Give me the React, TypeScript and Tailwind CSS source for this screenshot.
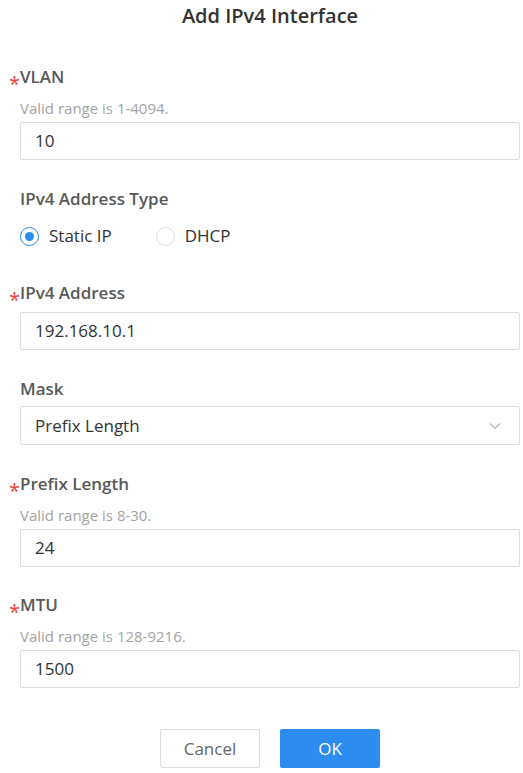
const fields = {
  vlan: { label: "VLAN", help: "Valid range is 1-4094.", value: "10" },
  prefix: { label: "Prefix Length", help: "Valid range is 8-30.", value: "24" },
  mtu: { label: "MTU", help: "Valid range is 128-9216.", value: "1500" },
};

function Label({ text, required, className = "" }: { text: string; required?: boolean; className?: string }) {
  return (
    <div className={`relative h-[22px] text-[17px] font-semibold leading-[22px] text-[#595959] ${className}`}>
      {required && (
        <span className="absolute left-[-11px] top-[7px] text-[20px] font-normal leading-[22px] text-[#f04134]">*</span>
      )}
      {text}
    </div>
  );
}

function TextInput({ value, className = "" }: { value: string; className?: string }) {
  return (
    <div
      className={`flex h-[38px] items-center rounded-[2px] border border-[#dedede] bg-white px-[14px] text-[17px] text-[#333] ${className}`}
    >
      {value}
    </div>
  );
}

function Help({ text }: { text: string }) {
  return <div className="mt-[10px] h-[20px] text-[15px] leading-[20px] text-[#a3a3a3]">{text}</div>;
}

function Radio({ checked, label }: { checked?: boolean; label: string }) {
  return (
    <div className="flex items-center gap-[10px]">
      <span
        className={`flex h-[19px] w-[19px] items-center justify-center rounded-full border bg-white ${
          checked ? "border-[#2d8cf0]" : "border-[#dedede]"
        }`}
      >
        {checked && <span className="h-[9px] w-[9px] rounded-full bg-[#2d8cf0]" />}
      </span>
      <span className="text-[17px] text-[#333]">{label}</span>
    </div>
  );
}

export default function App() {
  return (
    <div className="h-[773px] w-[523px] bg-white" style={{ fontFamily: '"Open Sans", "Noto Sans", sans-serif' }}>
      <div className="ml-[20px] w-[500px]">
        <h1 className="pt-[4px] text-center text-[20px] font-[550] leading-[24px] text-[#333]">Add IPv4 Interface</h1>

        <Label text={fields.vlan.label} required className="mt-[38px]" />
        <Help text={fields.vlan.help} />
        <TextInput value={fields.vlan.value} className="mt-[4px]" />

        <Label text="IPv4 Address Type" className="mt-[28px]" />
        <div className="mt-[15px] flex h-[22px] items-center gap-[44px]">
          <Radio checked label="Static IP" />
          <Radio label="DHCP" />
        </div>

        <Label text="IPv4 Address" required className="mt-[35px]" />
        <TextInput value="192.168.10.1" className="mt-[8px]" />

        <Label text="Mask" className="mt-[28px]" />
        <div className="mt-[6px] flex h-[39px] items-center justify-between rounded-[2px] border border-[#dedede] bg-white pl-[14px] pr-[18px] text-[17px] text-[#333]">
          <span>Prefix Length</span>
          <svg width="12" height="8" viewBox="0 0 12 8" fill="none" stroke="#b5b5b5" strokeWidth="1.2">
            <path d="M1 1.5l5 5 5-5" />
          </svg>
        </div>

        <Label text={fields.prefix.label} required className="mt-[28px]" />
        <Help text={fields.prefix.help} />
        <TextInput value={fields.prefix.value} className="mt-[4px]" />

        <Label text={fields.mtu.label} required className="mt-[27px]" />
        <Help text={fields.mtu.help} />
        <TextInput value={fields.mtu.value} className="mt-[4px]" />

        <div className="mt-[41px] flex justify-center gap-[20px]">
          <button className="h-[39px] w-[100px] rounded-[2px] border border-[#dcdcdc] bg-white text-[17px] text-[#666]">
            Cancel
          </button>
          <button className="h-[39px] w-[100px] rounded-[2px] bg-[#2d8cf0] text-[17px] text-white">OK</button>
        </div>
      </div>
    </div>
  );
}
